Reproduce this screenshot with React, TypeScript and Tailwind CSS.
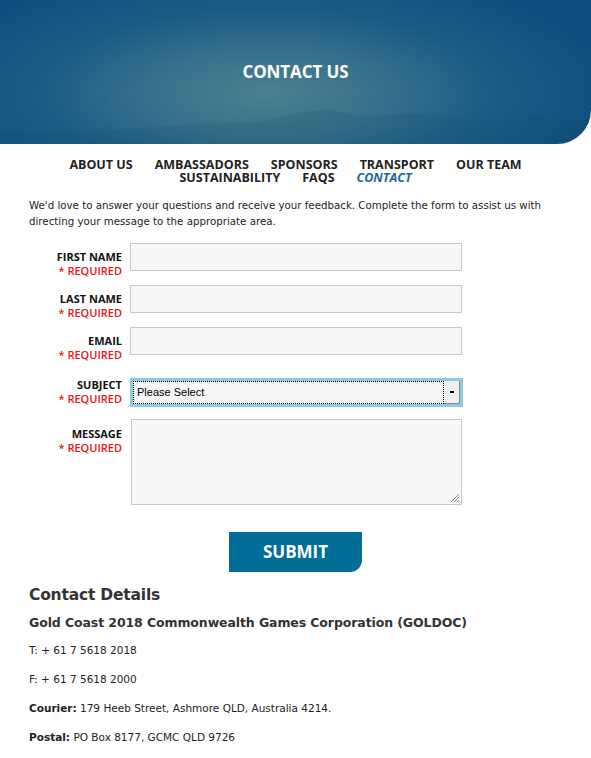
import React from "react";

const body = { fontFamily: '"DejaVu Sans", Verdana, sans-serif' };
const head = { fontFamily: '"Open Sans", "Liberation Sans", sans-serif' };

function Label({ name, pt }: { name: string; pt: string }) {
  return (
    <div className={`w-[93px] shrink-0 text-right text-[11px] leading-[14px] ${pt}`} style={head}>
      <div className="font-bold text-[#111]">{name}</div>
      <div className="font-semibold text-[#e8141c]">* REQUIRED</div>
    </div>
  );
}

export default function App() {
  return (
    <div className="w-[591px] bg-white text-[#222]" style={body}>
      <header className="relative h-[144px] rounded-br-[34px] overflow-hidden bg-[radial-gradient(ellipse_60%_90%_at_45%_65%,#4b8090_0%,#356f8a_35%,#1a5b84_65%,#0c4e7e_100%)] flex items-center justify-center">
        <svg className="absolute left-0 bottom-0" width="591" height="50" viewBox="0 0 591 50" preserveAspectRatio="none">
          <path d="M0 40 L120 36 L200 30 L260 28 L300 18 L330 16 L360 22 L420 20 L470 26 L540 24 L591 28 L591 50 L0 50 Z" fill="#16485f" opacity="0.15" />
        </svg>
        <h1 className="relative text-white text-[17px] font-bold tracking-[-0.1px]" style={head}>CONTACT US</h1>
      </header>

      <nav className="mt-[14px] flex flex-col items-center text-[12.5px] font-bold leading-[13px] text-[#222]" style={head}>
        <div className="flex h-[13px] gap-x-[22px]">
          <span>ABOUT US</span>
          <span>AMBASSADORS</span>
          <span>SPONSORS</span>
          <span>TRANSPORT</span>
          <span>OUR TEAM</span>
        </div>
        <div className="flex h-[13px] gap-x-[22px]">
          <span>SUSTAINABILITY</span>
          <span>FAQS</span>
          <span className="italic text-[#1b6a96]">CONTACT</span>
        </div>
      </nav>

      <p className="mx-[29px] mt-[13px] text-[10.25px] leading-[16px] text-[#222]">
        We'd love to answer your questions and receive your feedback. Complete the form to assist us with directing your message to the appropriate area.
      </p>

      <form className="mt-[14px] flex flex-col">
        <div className="flex h-[28px] gap-[8px] pl-[29px]">
          <Label name="FIRST NAME" pt="pt-[7px]" />
          <div className="w-[332px] h-[28px] border border-[#c8c8c8] bg-[#f7f7f7]" />
        </div>
        <div className="mt-[14px] flex h-[28px] gap-[8px] pl-[29px]">
          <Label name="LAST NAME" pt="pt-[7px]" />
          <div className="w-[332px] h-[28px] border border-[#c8c8c8] bg-[#f7f7f7]" />
        </div>
        <div className="mt-[14px] flex h-[28px] gap-[8px] pl-[29px]">
          <Label name="EMAIL" pt="pt-[7px]" />
          <div className="w-[332px] h-[28px] border border-[#c8c8c8] bg-[#f7f7f7]" />
        </div>
        <div className="mt-[23px] flex h-[29px] gap-[8px] pl-[29px]">
          <Label name="SUBJECT" pt="pt-[0px]" />
          <div className="w-[333px] h-[29px] border-[3px] border-[#8ccbe3] bg-[#f7f7f7] flex">
            <div className="flex-1 border border-dotted border-black flex items-center pl-[3px] text-[11px] text-black" style={{ fontFamily: '"Liberation Sans", Arial, sans-serif' }}>
              Please Select
            </div>
            <div className="w-[16px] border-r border-b border-[#8a8a8a] bg-[#efefef] flex items-center justify-center">
              <div className="w-[4px] h-[2px] bg-black" />
            </div>
          </div>
        </div>
        <div className="mt-[12px] flex h-[86px] gap-[8px] pl-[29px]">
          <Label name="MESSAGE" pt="pt-[8px]" />
          <div className="relative ml-[1px] w-[331px] h-[86px] border border-[#c8c8c8] bg-[#f7f7f7]">
            <svg className="absolute right-[1px] bottom-[1px]" width="10" height="10" viewBox="0 0 10 10">
              <path d="M9 1 L1 9 M9 4 L4 9 M9 7 L7 9" stroke="#888" strokeWidth="1" />
            </svg>
          </div>
        </div>
        <div className="mt-[27px] flex justify-center">
          <button type="button" className="w-[133px] h-[40px] bg-[#006e98] rounded-br-[12px] text-white text-[17px] font-bold" style={head}>
            SUBMIT
          </button>
        </div>
      </form>

      <section className="mx-[29px] mt-[12px] pb-[12px]">
        <h2 className="text-[15.5px] font-bold leading-[22px] tracking-[-0.2px] text-[#333]">Contact Details</h2>
        <h3 className="mt-[8px] text-[12.5px] font-bold leading-[17px] tracking-[-0.1px] text-[#333]">Gold Coast 2018 Commonwealth Games Corporation (GOLDOC)</h3>
        <p className="mt-[13px] text-[10.5px] leading-[13px]">T: + 61 7 5618 2018</p>
        <p className="mt-[16px] text-[10.5px] leading-[13px]">F: + 61 7 5618 2000</p>
        <p className="mt-[16px] text-[10.5px] leading-[13px]"><b>Courier:</b> 179 Heeb Street, Ashmore QLD, Australia 4214.</p>
        <p className="mt-[16px] text-[10.5px] leading-[13px]"><b>Postal:</b> PO Box 8177, GCMC QLD 9726</p>
      </section>
    </div>
  );
}
